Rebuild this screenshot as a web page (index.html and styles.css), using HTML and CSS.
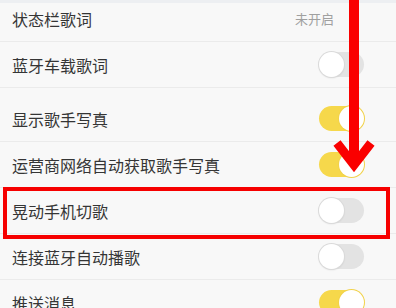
FILE: index.html
```html
<!DOCTYPE html>
<html lang="zh-CN">
<head>
<meta charset="utf-8">
<link rel="stylesheet" href="styles.css">
</head>
<body>
<div class="screen">
  <div class="list">
    <div class="row first">
      <span class="label">状态栏歌词</span>
      <span class="value">未开启</span>
      <svg class="chev" width="7" height="12" viewBox="0 0 7 12"><polyline points="1,1 6,6 1,11" fill="none" stroke="#c4c4c4" stroke-width="1.4"/></svg>
    </div>
    <div class="row"><span class="label">蓝牙车载歌词</span><span class="toggle"></span></div>
    <div class="spacer"></div>
    <div class="row"><span class="label">显示歌手写真</span><span class="toggle on"></span></div>
    <div class="row"><span class="label">运营商网络自动获取歌手写真</span><span class="toggle on"></span></div>
    <div class="row"><span class="label">晃动手机切歌</span><span class="toggle"></span></div>
    <div class="row"><span class="label">连接蓝牙自动播歌</span><span class="toggle"></span></div>
    <div class="row"><span class="label">推送消息</span><span class="toggle on"></span></div>
  </div>
  <div class="topbar"></div>
  <div class="highlight"></div>
  <svg class="arrow" width="396" height="308" viewBox="0 0 396 308">
    <rect x="349" y="0" width="10" height="166" fill="#fa0000"/>
    <polyline points="337,143 354,165 371,143" fill="none" stroke="#fa0000" stroke-width="9" stroke-linejoin="miter" stroke-miterlimit="10"/>
  </svg>
</div>
</body>
</html>
```

FILE: styles.css
```css
* { box-sizing: border-box; }
html, body { margin: 0; padding: 0; }
body {
  background: #f8f8f8;
  font-family: "Noto Sans CJK SC", "Noto Sans", sans-serif;
  color: #333;
}
.screen {
  position: relative;
  width: 396px;
  height: 308px;
  overflow: hidden;
  background: #f8f8f8;
}
.list {
  display: flex;
  flex-direction: column;
  margin-top: -4px;
}
.row {
  display: flex;
  align-items: center;
  height: 46px;
  padding: 0 32px 0 12px;
  border-bottom: 1px solid #ebebeb;
  flex-shrink: 0;
}
.spacer { height: 8px; flex-shrink: 0; }
.label {
  flex: 1;
  font-size: 16px;
  color: #353535;
  letter-spacing: 0;
}
.value {
  font-size: 13px;
  color: #a0a0a0;
}
.chev {
  margin-left: 17px;
  margin-right: 6px;
}
.toggle {
  position: relative;
  width: 45px;
  height: 25px;
  border-radius: 13px;
  background: #e3e3e3;
  flex-shrink: 0;
}
.toggle::after {
  content: "";
  position: absolute;
  left: 0;
  top: 0;
  width: 25px;
  height: 25px;
  border-radius: 50%;
  background: #fff;
  box-shadow: 0 0 0 1px #dadada, 0 1px 2px rgba(0,0,0,0.12);
}
.toggle.on { background: #f6d84b; }
.toggle.on::after {
  left: 20px;
  box-shadow: 0 0 0 1px #f1d24a;
}
.topbar {
  position: absolute;
  left: 0;
  top: 0;
  width: 100%;
  height: 3px;
  background: #edeff2;
}
.highlight {
  position: absolute;
  left: 3px;
  top: 187px;
  width: 387px;
  height: 52px;
  border: 4px solid #f60000;
}
.arrow {
  position: absolute;
  left: 0;
  top: 0;
}
```
